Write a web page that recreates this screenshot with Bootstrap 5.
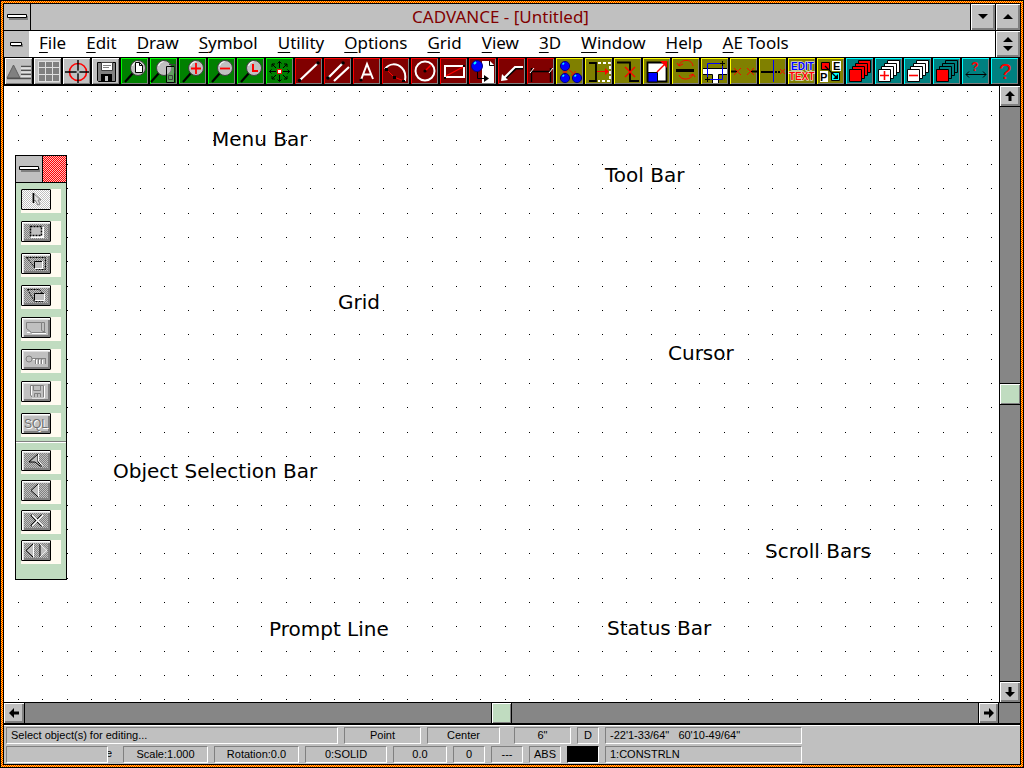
<!DOCTYPE html>
<html lang="en">
<head>
<meta charset="utf-8">
<meta name="viewport" content="width=device-width, initial-scale=1">
<title>CADVANCE - [Untitled]</title>
<link rel="stylesheet" href="https://cdn.jsdelivr.net/npm/bootstrap@5.3.0/dist/css/bootstrap.min.css">
<style>
  :root { --face: #c0c0c0; --shade: #808080; --mint: #c0dcc0; --cream: #fffbf0; }
  body { font-family: "Noto Sans", sans-serif; font-size: 17px; line-height: 20px; color: #000; background: #000; }
  button { border: 0; padding: 0; margin: 0; color: #000; display: flex; align-items: center; justify-content: center; flex: none; }
  svg { display: block; }

  /* window frame: black, red/yellow checker, black */
  .frame-edge { padding: 1px; background: #000; }
  .frame-checker { padding: 2px; background: #ff0 url("data:image/svg+xml,%3Csvg xmlns='http://www.w3.org/2000/svg' width='2' height='2'%3E%3Cpath fill='red' d='M0 0h1v1H0zM1 1h1v1H1z'/%3E%3C/svg%3E"); }

  .caption { background: var(--face); border-bottom: 1px solid #000; height: 27px; }
  .caption h1 { font-size: 17px; line-height: 20px; color: #800000; }
  .sysbox { width: 27px; background: var(--face); border-right: 1px solid #000; }
  .sysbox-doc { width: 25px; background: var(--face); }
  .winbtn { width: 25px; background: var(--face); border-left: 1px solid #000; box-shadow: inset 1px 1px #fff, inset -2px -2px var(--shade); }

  .menus { background: #fff; height: 27px; border-bottom: 1px solid #000; }
  .menus a { color: #000; text-decoration: none; white-space: nowrap; }
  .menus u { text-underline-offset: 3px; text-decoration-thickness: 1px; }
  .menu-items { gap: 20px; padding: 0 0 2px 10px; }

  .tools { background: #000; padding: 0 0 2px 1px; gap: 2px; height: 28px; }
  .tool { width: 27px; height: 26px; box-shadow: inset 1px 1px var(--lit), inset -1px -1px var(--shade); background: var(--base); }
  .t-gray { --base: #c0c0c0; --lit: #fff; }
  .t-green { --base: #008000; --lit: #0f0; }
  .t-red { --base: #800000; --lit: #f00; }
  .t-olive { --base: #808000; --lit: #ff0; }
  .t-teal { --base: #008080; --lit: #0ff; }

  .sheet { background: #fff; min-width: 0; min-height: 0; }
  .sheet > svg text { font-family: "DejaVu Sans", sans-serif; font-size: 20px; }

  .palette { left: 11px; top: 69px; width: 52px; border: 1px solid #000; background: var(--mint); }
  .palette-head { height: 27px; border-bottom: 1px solid #000; }
  .palette-grip { background: #ffc0c0 url("data:image/svg+xml,%3Csvg xmlns='http://www.w3.org/2000/svg' width='2' height='2'%3E%3Cpath fill='red' d='M0 0h1v1H0zM1 1h1v1H1z'/%3E%3C/svg%3E"); }
  .slots { padding: 6px 5px 4px 5px; gap: 8px; }
  .slots-nav { padding: 8px 5px 15px 5px; gap: 6px; border-top: 1px solid var(--shade); box-shadow: inset 0 1px #fff; }
  .slot { background: var(--cream); height: 24px; }
  .pick { width: 30px; height: 21px; border: 1px solid #000; border-radius: 1px; box-shadow: inset 1px 1px #fff, inset 2px 2px #dfdfdf, inset -2px -2px var(--shade); background: var(--face); }
  .pick-dim { background: #c0c0c0 url("data:image/svg+xml,%3Csvg xmlns='http://www.w3.org/2000/svg' width='2' height='2'%3E%3Cpath fill='gray' d='M0 0h1v1H0zM1 1h1v1H1z'/%3E%3C/svg%3E"); }
  .pick-on { background: #fff url("data:image/svg+xml,%3Csvg xmlns='http://www.w3.org/2000/svg' width='2' height='2'%3E%3Cpath fill='silver' d='M0 0h1v1H0zM1 1h1v1H1z'/%3E%3C/svg%3E"); box-shadow: none; }
  .pick-word { font: 12px/14px "Liberation Sans", sans-serif; color: #707070; text-shadow: 1px 1px #fff; }

  .track { background: #868686; }
  .vbar { width: 21px; border-left: 1px solid #000; }
  .hbar { height: 23px; border-top: 1px solid #000; border-bottom: 2px solid #000; }
  .arrow { background: var(--face); box-shadow: inset 1px 1px #fff, inset -2px -2px var(--shade); }
  .vbar .arrow { height: 21px; width: 20px; }
  .hbar .arrow { width: 21px; height: 20px; }
  .up, .thumb-v { border-bottom: 1px solid #000; }
  .down, .thumb-v { border-top: 1px solid #000; }
  .left, .thumb-h { border-right: 1px solid #000; }
  .right, .thumb-h { border-left: 1px solid #000; }
  .right { border-right: 1px solid #000; }
  .thumb { background: var(--mint); box-shadow: inset 1px 1px #fff, inset -1px -1px var(--shade); }
  .thumb-v { height: 22px; width: 20px; }
  .thumb-h { width: 21px; height: 20px; }

  .status { background: var(--face); border-top: 1px solid #fff; padding: 1px 2px; font: 11px/14px "Liberation Sans", sans-serif; height: 39px; gap: 2px; white-space: nowrap; }
  .status-row { gap: 6px; }
  .cell { height: 17px; border: 1px solid; border-color: var(--shade) #fff #fff var(--shade); text-align: center; flex: none; overflow: hidden; }
  .w-prompt { width: 332px; } .w-77 { width: 77px; } .w-73 { width: 73px; } .w-57 { width: 57px; } .w-22 { width: 22px; }
  .w-197 { width: 197px; } .w-102 { width: 102px; } .w-85 { width: 85px; } .w-82 { width: 82px; } .w-54 { width: 54px; } .w-32 { width: 32px; }
  .tail { width: 9px; }
  .tail span { width: 4px; overflow: hidden; display: flex; justify-content: flex-end; }
  .swatch { background: #000; border-color: #000 #fff #fff #000; }
</style>
</head>
<body>
<svg width="0" height="0" class="position-absolute" aria-hidden="true">
  <defs>
    <g id="lens"><path d="M12 15 4 24" stroke="#000" stroke-width="2.2"/><circle cx="17" cy="10" r="7.5" fill="#c0c0c0" stroke="#404040"/><path d="M11.500 8a6 6 0 0 1 5-4.500" stroke="#fff" fill="none"/></g>
    <g id="stack" stroke="#000"><path d="M12.500 2.500h12v12h-12z"/><path d="M9.500 5.500h12v12h-12z"/><path d="M6.500 8.500h12v12h-12z"/></g>
    <g id="ball"><circle r="4.600" fill="#00f" stroke="#000080"/><path d="M-2.500-1.500l1.500-1.500" stroke="#0ff" stroke-width="1.600"/></g>
    <path id="bar" d="M.5.500h19v3H.5z" fill="#fff" stroke="#000"/>
  </defs>
</svg>

<div class="frame-edge vh-100">
<div class="frame-checker h-100">
<div class="frame-edge h-100 d-flex flex-column overflow-hidden">

  <header class="caption d-flex flex-shrink-0">
    <button class="sysbox" aria-label="Control menu"><svg width="21" height="6"><path d="M2 2h19v4H2z" fill="#808080"/><use href="#bar"/></svg></button>
    <h1 class="flex-grow-1 m-0 text-center align-self-center fw-normal">CADVANCE - [Untitled]</h1>
    <button class="winbtn" aria-label="Minimize"><svg width="10" height="6"><path d="M0 0h10L5 5z"/></svg></button>
    <button class="winbtn" aria-label="Maximize"><svg width="10" height="6"><path d="M0 5h10L5 0z"/></svg></button>
  </header>

  <nav class="menus d-flex flex-shrink-0">
    <button class="sysbox-doc" aria-label="Document menu"><svg width="13" height="5"><path d="M2 2h11v3H2z" fill="#808080"/><path d="M.5.500h11v3H.5z" fill="#fff" stroke="#000"/></svg></button>
    <div class="menu-items d-flex align-items-center flex-grow-1 overflow-hidden">
      <a href="#"><u>F</u>ile</a><a href="#"><u>E</u>dit</a><a href="#"><u>D</u>raw</a><a href="#"><u>S</u>ymbol</a><a href="#"><u>U</u>tility</a><a href="#"><u>O</u>ptions</a><a href="#"><u>G</u>rid</a><a href="#"><u>V</u>iew</a><a href="#"><u>3</u>D</a><a href="#"><u>W</u>indow</a><a href="#"><u>H</u>elp</a><a href="#"><u>A</u>E Tools</a>
    </div>
    <button class="winbtn" aria-label="Restore"><svg width="10" height="14"><path d="M0 5h10L5 0zM0 9h10l-5 5z"/></svg></button>
  </nav>

  <div class="tools d-flex flex-shrink-0 overflow-hidden" role="toolbar" aria-label="Tool Bar">
    <button class="tool t-gray" aria-label="Text styles"><svg width="27" height="26"><path d="M2 20 8.500 7 15 20z" fill="#808080" stroke="#606060"/><path d="M16 8.500h10M16 12.500h10M16 16.500h10M2 20.500h24" stroke="#505050" stroke-width="1.500"/><path d="M16 10h10M16 14h10M16 18h10" stroke="#fff"/></svg></button>
    <button class="tool t-gray" aria-label="Grid"><svg width="27" height="26"><path d="M4 3h22v21H4z" fill="#dfdfdf"/><path d="M5 4h6v5H5zM12 4h6v5h-6zM19 4h6v5h-6zM5 10h6v6H5zM12 10h6v6h-6zM19 10h6v6h-6zM5 17h6v6H5zM12 17h6v6h-6zM19 17h6v6h-6z" fill="#808080"/></svg></button>
    <button class="tool t-gray" aria-label="Target"><svg width="27" height="26"><circle cx="15" cy="14" r="8.500" fill="none" stroke="#f00" stroke-width="1.600"/><path d="M2 14h24M15 2v23" stroke="#000" stroke-width="1.400"/><path d="M13.500 14h3M15 12.500v3" stroke="#c0c0c0" stroke-width="1.400"/></svg></button>
    <button class="tool t-gray" aria-label="Save"><svg width="27" height="26"><path d="M5.500 4.500h18v19h-17l-1-1z" fill="#808080" stroke="#000"/><path d="M9.500 4.500h11v8h-11z" fill="#fff" stroke="#404040"/><path d="M11 7.500h8M11 9.500h6" stroke="#808080"/><path d="M9 16h11v7H9z"/><path d="M13 18h3v5h-3z" fill="#c0c0c0"/></svg></button>
    <button class="tool t-green" aria-label="Zoom page"><svg width="27" height="26"><use href="#lens"/><path d="M14.500 4.500h4l3 3v7h-7z" fill="#fff" stroke="#000"/><path d="M18.500 4.500v3h3" fill="none" stroke="#000"/></svg></button>
    <button class="tool t-green" aria-label="Zoom window"><svg width="27" height="26"><use href="#lens" x="-3"/><path d="M16.500 8.500h8v16h-8z" fill="#c0c0c0" fill-opacity=".5" stroke="#000"/><path d="M18.500 17.500h4v4h-4zM19 6.500h6v9" fill="none" stroke="#404040"/></svg></button>
    <button class="tool t-green" aria-label="Zoom in"><svg width="27" height="26"><use href="#lens"/><path d="M12 10.500h10M17 5v11" stroke="#f00" stroke-width="1.800"/></svg></button>
    <button class="tool t-green" aria-label="Zoom out"><svg width="27" height="26"><use href="#lens"/><path d="M12 10.500h10" stroke="#f00" stroke-width="1.800"/></svg></button>
    <button class="tool t-green" aria-label="Zoom last"><svg width="27" height="26"><use href="#lens"/><path d="M16 6v7h5" fill="none" stroke="#f00" stroke-width="2"/></svg></button>
    <button class="tool t-green" aria-label="Pan"><svg width="27" height="26" fill="none" stroke="#000"><path d="M13.500 3v20M3 13.500h21M6 6l15 15M21 6 6 21M11.500 5.500l2-2 2 2M11.500 21.500l2 2 2-2M5.500 11.500l-2 2 2 2M21.500 11.500l2 2-2 2M6 9V6h3M18 6h3v3M6 18v3h3M21 18v3h-3"/><path d="M10 10h7v7h-7z" fill="#008000" stroke="none"/><path d="M11.500 11.500h4v4h-4z" fill="#fff" stroke="#f00"/></svg></button>
    <button class="tool t-red" aria-label="Line"><svg width="27" height="26"><path d="M4 23 23 5" stroke="#fff" stroke-width="2.200"/><circle cx="4.500" cy="22.500" r="1.800"/><circle cx="23" cy="5" r="1.800"/></svg></button>
    <button class="tool t-red" aria-label="Double line"><svg width="27" height="26"><path d="M4 20 19 5M10 23 25 9" stroke="#fff" stroke-width="2.200"/><circle cx="4" cy="20" r="1.800"/><circle cx="19" cy="5" r="1.800"/></svg></button>
    <button class="tool t-red" aria-label="Text"><svg width="27" height="26"><path d="M8 22 14 6l6 15M10 16.500h8" stroke="#fff" stroke-width="2" fill="none"/><circle cx="8" cy="22" r="1.600"/></svg></button>
    <button class="tool t-red" aria-label="Arc"><svg width="27" height="26" fill="none"><path d="M3 11C7 5 15 5 20 10c3 3 4 7 3 13" stroke="#fff" stroke-width="2"/><path d="M4 11l8 8 10 4" stroke="#f00"/><path d="M3 10h3v3H3zM11 18h3v3h-3zM20 22h3v2h-3z" fill="#000"/></svg></button>
    <button class="tool t-red" aria-label="Circle"><svg width="27" height="26" fill="none"><circle cx="14" cy="13" r="9.500" stroke="#fff" stroke-width="2"/><path d="M14 13l6-6" stroke="#f00" stroke-width="1.400"/><circle cx="14" cy="13" r="1.600" fill="#000"/></svg></button>
    <button class="tool t-red" aria-label="Rectangle"><svg width="27" height="26" fill="none"><path d="M5 8h19v11H5z" stroke="#fff" stroke-width="2"/><path d="M6 18 23 9" stroke="#f00" stroke-width="1.400"/><path d="M4 19h2v2H4zM23 7h2v2h-2z" fill="#000"/></svg></button>
    <button class="tool t-red" aria-label="Place symbol"><svg width="27" height="26"><path d="M13 3h8l4 4v18H13z" fill="#fff"/><path d="M20.500 3v4.500H25" stroke="#000" fill="none"/><circle cx="8" cy="8" r="5.500" fill="#00f" stroke="#000080"/><path d="M5 6l2-2" stroke="#0ff" stroke-width="2"/><path d="M8.500 14v6.500H16" stroke="#000" fill="none"/><path d="M15 17l5 3.500-5 3.500z"/></svg></button>
    <button class="tool t-red" aria-label="Leader"><svg width="27" height="26" fill="none"><path d="M25 10h-7L6 21" stroke="#000" stroke-width="3"/><path d="M25 9h-8L5 21" stroke="#fff" stroke-width="2"/><path d="M3 23l1-7 6 6z" fill="#fff"/></svg></button>
    <button class="tool t-red" aria-label="Dimension"><svg width="27" height="26" fill="none" stroke="#000"><path d="M4.500 10v14M23.500 10v14M4 13.500h20" stroke-width="1.400"/><path d="M3 15l4-5M22 15l4-5" stroke="#fff"/></svg></button>
    <button class="tool t-olive" aria-label="Copy"><svg width="27" height="26"><path d="M9 8v8M11 10l8 7M7 13l2 3 2-3M15 17h4v-4" fill="none" stroke="#f00"/><use href="#ball" x="9" y="8"/><use href="#ball" x="9" y="20"/><use href="#ball" x="21" y="20"/></svg></button>
    <button class="tool t-olive" aria-label="Stretch"><svg width="27" height="26" fill="none"><path d="M4 5h7v18H4" stroke="#000" stroke-width="1.800"/><path d="M13 5h12v18H13" stroke="#fff" stroke-width="1.800" stroke-dasharray="3 2"/><path d="M12 13.500h10" stroke="#f00"/><path d="M20 10l4 3.500-4 3.500z" fill="#f00"/></svg></button>
    <button class="tool t-olive" aria-label="Break"><svg width="27" height="26" fill="none"><path d="M3 4.500h13v18.500h9" stroke="#000" stroke-width="1.800"/><path d="M11 9l10 10M21 9 11 19" stroke="#f00" stroke-width="1.400"/></svg></button>
    <button class="tool t-olive" aria-label="Scale"><svg width="27" height="26"><path d="M4.500 4.500h19v19h-19z" fill="#fff" stroke="#000" stroke-width="1.800"/><path d="M5 14.500h9.500V24H5z" fill="#00f" stroke="#000"/><path d="M14 14l8-8" stroke="#f00" stroke-width="1.400"/><path d="M24 3v7l-7-7z" fill="#f00"/></svg></button>
    <button class="tool t-olive" aria-label="Rotate"><svg width="27" height="26" fill="none"><path d="M4 11h18v3H4z" fill="#000"/><path d="M7 8c1-7 13-8 14 0M21 16c-1 6-12 7-14 1M5 5l2 3 4-2M23 19l-2-3-4 2" stroke="#f00"/></svg></button>
    <button class="tool t-olive" aria-label="Wall"><svg width="27" height="26" fill="none"><path d="M2 10h24v6h-8v9h-7v-9H2z" fill="#fff"/><path d="M2 10.500h24M2 16.500h9.500V25M26 16.500h-8.500V25" stroke="#000"/><path d="M6.500 5.500h15v16h-15z" stroke="#00f"/><path d="M21.500 3v5M19 5.500h5M6.500 19v5M4 21.500h5" stroke="#000"/></svg></button>
    <button class="tool t-olive" aria-label="Trim"><svg width="27" height="26" fill="none"><path d="M1 13.500h6M21 13.500h6" stroke="#000" stroke-width="2"/><path d="M4 10l7 7M11 10l-7 7M17 10l7 7M24 10l-7 7" stroke="#f00" stroke-width=".9"/></svg></button>
    <button class="tool t-olive" aria-label="Extend"><svg width="27" height="26" fill="none"><path d="M2 14h12M16 14h2M19 14h2" stroke="#000" stroke-width="2"/><path d="M14.500 2v22" stroke="#00f"/><path d="M21 11l5 5M26 11l-5 5" stroke="#f00" stroke-width=".9"/></svg></button>
    <button class="tool t-olive" aria-label="Edit text"><svg width="27" height="26" font-family="Liberation Sans, sans-serif" font-size="10" font-weight="700" stroke="#fff" stroke-width="1" paint-order="stroke"><text x="3" y="12" fill="#00f">EDIT</text><text x="1" y="22" fill="#f00">TEXT</text></svg></button>
    <button class="tool t-olive" aria-label="Edit properties"><svg width="27" height="26"><path d="M15 3h9v10h-9zM3 13h8v11H3z" fill="#fff"/><g font-family="Liberation Sans, sans-serif" font-size="11" font-weight="700"><text x="16" y="12">E</text><text x="3" y="23">P</text></g><path d="M4.500 4.500h8v7h-8z" fill="#f00" stroke="#000"/><path d="M14.500 14.500h8v8h-8z" fill="#0ff" stroke="#000"/><path d="M8 8l11 11" stroke="#000" stroke-width="1.300"/><path d="M21 16v5h-5z"/></svg></button>
    <button class="tool t-teal" aria-label="Layers"><svg width="27" height="26"><use href="#stack" fill="#f00"/><path d="M3.500 11.500h12v12h-12z" fill="#f00" stroke="#000"/></svg></button>
    <button class="tool t-teal" aria-label="Layer on"><svg width="27" height="26"><use href="#stack" fill="#fff"/><path d="M3.500 11.500h12v12h-12z" fill="#fff" stroke="#000"/><path d="M5 17.500h9M9.500 13v9" stroke="#f00" stroke-width="1.600"/></svg></button>
    <button class="tool t-teal" aria-label="Layer off"><svg width="27" height="26"><use href="#stack" fill="#fff"/><path d="M3.500 11.500h12v12h-12z" fill="#fff" stroke="#000"/><path d="M5 17.500h9" stroke="#f00" stroke-width="1.600"/></svg></button>
    <button class="tool t-teal" aria-label="Active layer"><svg width="27" height="26"><use href="#stack" fill="#008080"/><path d="M3.500 11.500h12v12h-12z" fill="#f00" stroke="#000"/></svg></button>
    <button class="tool t-teal" aria-label="Measure"><svg width="27" height="26"><text x="13" y="13" text-anchor="middle" font-family="Liberation Sans, sans-serif" font-size="12" font-weight="700" fill="#f00">?</text><path d="M4 16.500h20M7 13.500l-3 3 3 3M21 13.500l3 3-3 3" fill="none" stroke="#000"/></svg></button>
    <button class="tool t-teal" aria-label="Help"><svg width="27" height="26"><text x="14" y="21" text-anchor="middle" font-family="Liberation Sans, sans-serif" font-size="22" fill="#f00">?</text></svg></button>
  </div>

  <main class="d-flex flex-grow-1 overflow-hidden">
    <div class="sheet position-relative flex-grow-1">
      <svg class="position-absolute w-100 h-100">
        <defs>
          <pattern id="dots" x="14" y="5" width="73" height="73" patternUnits="userSpaceOnUse">
            <path d="M0 0h1v1H0zM24 0h1v1h-1zM49 0h1v1h-1zM0 24h1v1H0zM24 24h1v1h-1zM49 24h1v1h-1zM0 49h1v1H0zM24 49h1v1h-1zM49 49h1v1h-1z"/>
          </pattern>
        </defs>
        <rect x="14" y="5" width="100%" height="100%" fill="url(#dots)"/>
        <text x="208" y="60">Menu Bar</text>
        <text x="601" y="96">Tool Bar</text>
        <text x="334" y="223">Grid</text>
        <text x="664" y="274">Cursor</text>
        <text x="109" y="392">Object Selection Bar</text>
        <text x="761" y="472">Scroll Bars</text>
        <text x="265" y="550">Prompt Line</text>
        <text x="603" y="549">Status Bar</text>
      </svg>

      <aside class="palette position-absolute" aria-label="Object Selection Bar">
        <div class="palette-head d-flex">
          <button class="sysbox" aria-label="Palette menu"><svg width="21" height="6"><path d="M2 2h19v4H2z" fill="#808080"/><use href="#bar"/></svg></button>
          <div class="palette-grip flex-grow-1"></div>
        </div>
        <div class="slots d-flex flex-column">
          <div class="slot"><button class="pick pick-on" aria-label="Select"><svg width="26" height="17"><path d="M10 2v9l2-2 3 5 2-1-2-4h3z" fill="#dfdfdf" stroke="#808080"/><path d="M10.500 2v10" stroke="#000" stroke-width="1.500"/></svg></button></div>
          <div class="slot"><button class="pick pick-dim" aria-label="Box"><svg width="26" height="17"><path d="M8 4h13v11H8z" fill="#fff"/><path d="M7.500 3.500h11v9h-11z" fill="#c0c0c0" stroke="#000" stroke-width="1.500" stroke-dasharray="2 1"/></svg></button></div>
          <div class="slot"><button class="pick pick-dim" aria-label="Fence inside"><svg width="26" height="17" fill="none"><path d="M3.500 2.500h19v12h-9z" stroke="#000" stroke-dasharray="2 1"/><path d="M12 6h8v8h-8z" fill="#fff"/><path d="M12 7h7v6h-7z" fill="#c0c0c0"/><path d="M11.500 13V6.500H19" stroke="#000"/></svg></button></div>
          <div class="slot"><button class="pick pick-dim" aria-label="Fence crossing"><svg width="26" height="17" fill="none"><path d="M4.500 2.500h12l3 4v8h-8z" stroke="#000" stroke-dasharray="2 1"/><path d="M12 6h9v7h-9z" fill="#c0c0c0"/><path d="M11.500 13V6.500H21" stroke="#000"/><path d="M12 13.500h9.500V7" stroke="#fff"/></svg></button></div>
          <div class="slot"><button class="pick" aria-label="Properties"><svg width="26" height="17" fill="none" stroke="#808080"><path d="M3.500 3.500h15v8l4 2h-14l-5-4zM18.500 3.500h3v10"/><path d="M4 13.500h3M9 14.500h14" stroke="#fff"/></svg></button></div>
          <div class="slot"><button class="pick" aria-label="Key"><svg width="26" height="17" fill="none" stroke="#808080"><circle cx="6" cy="8" r="3"/><path d="M9 7.500h14M12.500 8v5M15.500 8v5M18.500 8v5M22.500 8v5"/><path d="M10 8.500h2M13.500 9v4M16.500 9v4M19.500 9v4" stroke="#fff"/></svg></button></div>
          <div class="slot"><button class="pick" aria-label="Save set"><svg width="26" height="17" fill="none" stroke="#808080"><path d="M7.500 2.500h13v12h-11l-2-2zM10.500 2.500v5h7v-5M11.500 14.500v-4h6v4M14.500 11v3"/><path d="M8.500 3v9M21.500 3v12H9" stroke="#fff"/></svg></button></div>
          <div class="slot"><button class="pick pick-word">SQL</button></div>
        </div>
        <div class="slots-nav d-flex flex-column">
          <div class="slot"><button class="pick pick-dim" aria-label="Pick last"><svg width="26" height="17"><path d="M15 2 6 10h6l5 4h2l-4-4z" fill="#c0c0c0" stroke="#000"/><path d="M15.500 2v7l4 5" stroke="#fff" fill="none"/></svg></button></div>
          <div class="slot"><button class="pick pick-dim" aria-label="Previous"><svg width="26" height="17"><path d="M15 2 8 8.500l7 6.500z" fill="#c0c0c0"/><path d="M15 2 8 8.500l7 6.500" fill="none" stroke="#000"/><path d="M15.500 2v13" stroke="#fff"/></svg></button></div>
          <div class="slot"><button class="pick pick-dim" aria-label="Clear"><svg width="26" height="17"><path d="M8 3l11 11M19 3 8 14" stroke="#000" stroke-width="2"/><path d="M9 3l11 11M20 3 9 14" stroke="#fff" stroke-width="1.500"/></svg></button></div>
          <div class="slot"><button class="pick pick-dim" aria-label="Both ways"><svg width="26" height="17" fill="#c0c0c0"><path d="M10 2 3 8.500l7 6.500zM17 2l7 6.500-7 6.500z"/><path d="M10 2 3 8.500l7 6.500M17 15V2" fill="none" stroke="#000"/><path d="M10.500 2v13M17 2l7 6.500-7 6.500" fill="none" stroke="#fff"/></svg></button></div>
        </div>
      </aside>
    </div>
    <div class="vbar track d-flex flex-column justify-content-between">
      <button class="arrow up" aria-label="Scroll up"><svg width="10" height="10"><path d="M5 0l5 5H6.500v5h-3V5H0z"/></svg></button>
      <div class="thumb thumb-v"></div>
      <button class="arrow down" aria-label="Scroll down"><svg width="10" height="10"><path d="M5 10 0 5h3.500V0h3v5H10z"/></svg></button>
    </div>
  </main>

  <div class="hbar track d-flex flex-shrink-0">
    <div class="d-flex flex-grow-1 justify-content-between">
      <button class="arrow left" aria-label="Scroll left"><svg width="10" height="10"><path d="M0 5l5-5v3.500h5v3H5V10z"/></svg></button>
      <div class="thumb thumb-h"></div>
      <button class="arrow right" aria-label="Scroll right"><svg width="10" height="10"><path d="M10 5 5 0v3.500H0v3h5V10z"/></svg></button>
    </div>
    <div class="vbar border-0"></div>
  </div>

  <footer class="status d-flex flex-column flex-shrink-0 overflow-hidden">
    <div class="status-row d-flex">
      <div class="cell w-prompt text-start ps-1">Select object(s) for editing...</div>
      <div class="cell w-77">Point</div>
      <div class="cell w-73 me-2">Center</div>
      <div class="cell w-57">6"</div>
      <div class="cell w-22">D</div>
      <div class="cell w-197 text-start ps-1">-22'1-33/64"&nbsp;&nbsp; 60'10-49/64"</div>
    </div>
    <div class="status-row d-flex">
      <div class="d-flex"><div class="cell w-102"></div><div class="tail"><span>e</span></div></div>
      <div class="cell w-85">Scale:1.000</div>
      <div class="cell w-85">Rotation:0.0</div>
      <div class="cell w-82">0:SOLID</div>
      <div class="cell w-54">0.0</div>
      <div class="cell w-32">0</div>
      <div class="cell w-32">---</div>
      <div class="cell w-32">ABS</div>
      <div class="cell w-32 swatch"></div>
      <div class="cell w-197 text-start ps-1">1:CONSTRLN</div>
    </div>
  </footer>

</div>
</div>
</div>
<script src="https://cdn.jsdelivr.net/npm/bootstrap@5.3.0/dist/js/bootstrap.bundle.min.js"></script>
</body>
</html>
